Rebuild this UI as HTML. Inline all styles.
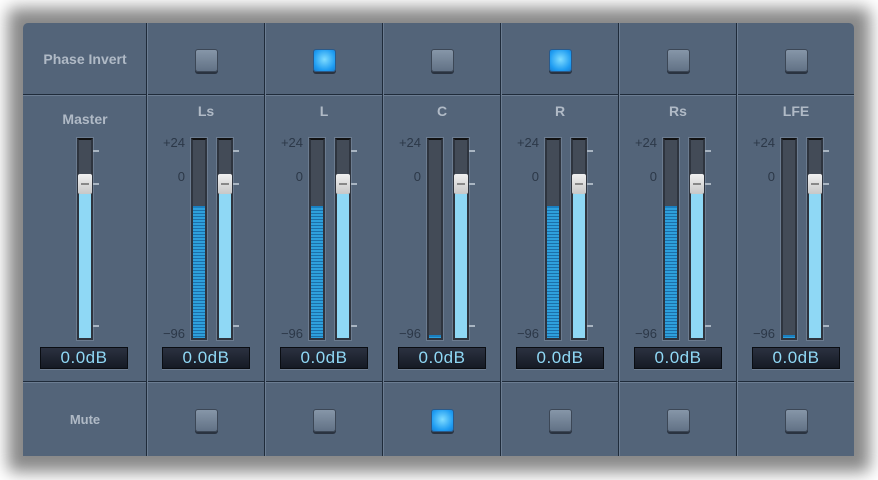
<!DOCTYPE html>
<html><head><meta charset="utf-8"><style>
*{margin:0;padding:0;box-sizing:border-box}
body{width:878px;height:480px;background:#fff;position:relative;overflow:hidden;font-family:"Liberation Sans",sans-serif}
.shadow{position:absolute;left:8px;top:8px;width:862px;height:464px;background:#888;filter:blur(8px);border-radius:6px}
.panel{position:absolute;left:23px;top:23px;width:831px;height:433px;background:#536479;border-radius:5px 5px 0 0;overflow:hidden}
.vl{position:absolute;top:0;width:2px;height:433px;background:#1f2b3a;border-right:1px solid #6c7d92}
.hl{position:absolute;left:0;width:831px;height:2px;background:#1f2b3a;border-bottom:1px solid #6c7d92}
.lab{position:absolute;font-weight:bold;color:#b0bac6;font-size:14px;text-align:center;width:118px}
.sc{position:absolute;color:#2c3848;font-size:13px;text-align:right;width:34px}
.bar{position:absolute;width:16px;height:202px;background:#434b57;border:2px solid #2e343e;box-shadow:0 0 0 1px #6b7b8f;border-top-color:#111}
.fill{position:absolute;left:0;right:0;bottom:0;background:#8fd8f5}
.mfill{position:absolute;left:0;right:0;bottom:0;background:repeating-linear-gradient(#2ea0dc 0 2px,#1c6fa8 2px 3px);border-top:2px solid #1a7fc0}
.h{position:absolute;left:-1px;width:14px;height:20px;background:linear-gradient(#f0f0f0,#c8c8c8);border-radius:2px}
.h:after{content:"";position:absolute;left:3px;top:9px;width:8px;height:2px;background:#888}
.tk{position:absolute;width:6px;height:2px;background:#a9b5c2}
.ro{position:absolute;width:88px;height:22px;background:linear-gradient(#2b3140,#151a24);border:1px solid #0a0d12;box-shadow:0 1px 0 #6d7c8f;color:#8fd8f5;font-size:17px;text-align:center;line-height:20px;letter-spacing:0.5px}
.btn{position:absolute;width:23px;height:23px;border-radius:3px;background:linear-gradient(#8696a8,#627286);border:1px solid #3c4756;box-shadow:0 2px 0 #2a3340}
.on{background:radial-gradient(circle at 50% 45%,#7fdcff,#1e9cf2 70%,#1a7fd0);border-color:#2a5a8a}
.c{position:absolute;top:0;width:118px;height:480px}
</style></head><body>
<div class="shadow"></div>
<div class="panel">
<div class="hl" style="top:71px"></div>
<div class="hl" style="top:358px"></div>
<div class="vl" style="left:123px"></div><div class="vl" style="left:241px"></div><div class="vl" style="left:359px"></div><div class="vl" style="left:477px"></div><div class="vl" style="left:595px"></div><div class="vl" style="left:713px"></div>
<div class="lab" style="left:3px;top:28px">Phase Invert</div>
<div class="lab" style="left:3px;top:88px">Master</div>
<div class="lab" style="left:3px;top:389px;font-size:13px">Mute</div>
<div class="bar" style="left:54px;top:115px"><div class="fill" style="height:144px"></div><div class="h" style="top:34px"></div></div>
<div class="tk" style="left:70px;top:127px"></div><div class="tk" style="left:70px;top:160px"></div><div class="tk" style="left:70px;top:302px"></div>
<div class="ro" style="left:17px;top:324px">0.0dB</div>
</div>

<div class="c" style="left:147px">
<div class="btn" style="left:48px;top:49px"></div>
<div class="lab" style="left:0;top:103px">Ls</div>
<div class="sc" style="left:4px;top:135px">+24</div><div class="sc" style="left:4px;top:169px">0</div><div class="sc" style="left:4px;top:326px">−96</div>
<div class="bar" style="left:44px;top:138px"><div class="mfill" style="height:132px"></div></div>
<div class="bar" style="left:70px;top:138px"><div class="fill" style="height:144px"></div><div class="h" style="top:34px"></div></div>
<div class="tk" style="left:86px;top:150px"></div><div class="tk" style="left:86px;top:183px"></div><div class="tk" style="left:86px;top:325px"></div>
<div class="ro" style="left:15px;top:347px">0.0dB</div>
<div class="btn" style="left:48px;top:409px"></div>
</div>

<div class="c" style="left:265px">
<div class="btn on" style="left:48px;top:49px"></div>
<div class="lab" style="left:0;top:103px">L</div>
<div class="sc" style="left:4px;top:135px">+24</div><div class="sc" style="left:4px;top:169px">0</div><div class="sc" style="left:4px;top:326px">−96</div>
<div class="bar" style="left:44px;top:138px"><div class="mfill" style="height:132px"></div></div>
<div class="bar" style="left:70px;top:138px"><div class="fill" style="height:144px"></div><div class="h" style="top:34px"></div></div>
<div class="tk" style="left:86px;top:150px"></div><div class="tk" style="left:86px;top:183px"></div><div class="tk" style="left:86px;top:325px"></div>
<div class="ro" style="left:15px;top:347px">0.0dB</div>
<div class="btn" style="left:48px;top:409px"></div>
</div>

<div class="c" style="left:383px">
<div class="btn" style="left:48px;top:49px"></div>
<div class="lab" style="left:0;top:103px">C</div>
<div class="sc" style="left:4px;top:135px">+24</div><div class="sc" style="left:4px;top:169px">0</div><div class="sc" style="left:4px;top:326px">−96</div>
<div class="bar" style="left:44px;top:138px"><div class="mfill" style="height:3px"></div></div>
<div class="bar" style="left:70px;top:138px"><div class="fill" style="height:144px"></div><div class="h" style="top:34px"></div></div>
<div class="tk" style="left:86px;top:150px"></div><div class="tk" style="left:86px;top:183px"></div><div class="tk" style="left:86px;top:325px"></div>
<div class="ro" style="left:15px;top:347px">0.0dB</div>
<div class="btn on" style="left:48px;top:409px"></div>
</div>

<div class="c" style="left:501px">
<div class="btn on" style="left:48px;top:49px"></div>
<div class="lab" style="left:0;top:103px">R</div>
<div class="sc" style="left:4px;top:135px">+24</div><div class="sc" style="left:4px;top:169px">0</div><div class="sc" style="left:4px;top:326px">−96</div>
<div class="bar" style="left:44px;top:138px"><div class="mfill" style="height:132px"></div></div>
<div class="bar" style="left:70px;top:138px"><div class="fill" style="height:144px"></div><div class="h" style="top:34px"></div></div>
<div class="tk" style="left:86px;top:150px"></div><div class="tk" style="left:86px;top:183px"></div><div class="tk" style="left:86px;top:325px"></div>
<div class="ro" style="left:15px;top:347px">0.0dB</div>
<div class="btn" style="left:48px;top:409px"></div>
</div>

<div class="c" style="left:619px">
<div class="btn" style="left:48px;top:49px"></div>
<div class="lab" style="left:0;top:103px">Rs</div>
<div class="sc" style="left:4px;top:135px">+24</div><div class="sc" style="left:4px;top:169px">0</div><div class="sc" style="left:4px;top:326px">−96</div>
<div class="bar" style="left:44px;top:138px"><div class="mfill" style="height:132px"></div></div>
<div class="bar" style="left:70px;top:138px"><div class="fill" style="height:144px"></div><div class="h" style="top:34px"></div></div>
<div class="tk" style="left:86px;top:150px"></div><div class="tk" style="left:86px;top:183px"></div><div class="tk" style="left:86px;top:325px"></div>
<div class="ro" style="left:15px;top:347px">0.0dB</div>
<div class="btn" style="left:48px;top:409px"></div>
</div>

<div class="c" style="left:737px">
<div class="btn" style="left:48px;top:49px"></div>
<div class="lab" style="left:0;top:103px">LFE</div>
<div class="sc" style="left:4px;top:135px">+24</div><div class="sc" style="left:4px;top:169px">0</div><div class="sc" style="left:4px;top:326px">−96</div>
<div class="bar" style="left:44px;top:138px"><div class="mfill" style="height:3px"></div></div>
<div class="bar" style="left:70px;top:138px"><div class="fill" style="height:144px"></div><div class="h" style="top:34px"></div></div>
<div class="tk" style="left:86px;top:150px"></div><div class="tk" style="left:86px;top:183px"></div><div class="tk" style="left:86px;top:325px"></div>
<div class="ro" style="left:15px;top:347px">0.0dB</div>
<div class="btn" style="left:48px;top:409px"></div>
</div>
</body></html>
